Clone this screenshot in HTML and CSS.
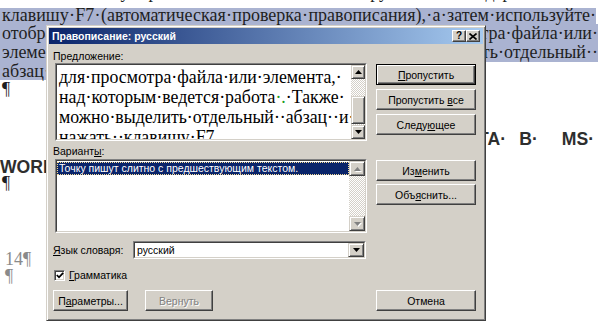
FILE: index.html
```html
<!DOCTYPE html>
<html lang="ru">
<head>
  <meta charset="UTF-8">
  <title>Правописание: русский</title>
  <link rel="stylesheet" href="styles.css">
</head>
<body>
  <div class="doc">
    <div class="line line-top">
      <span>нажмите·кнопку·Правописание·на·панели·инструментов·Стандартная·или·нажмите·</span>
      <span class="sel-tail"></span>
    </div>
    <div class="line just sel sel-first">клавишу · F7 · (автоматическая · проверка · правописания), · а · затем · используйте·</div>
    <div class="line sel">
      <span>отображаемое·контекстное</span>
      <span>для·просмотра·файла·или·</span>
    </div>
    <div class="line sel">
      <span>элемента,·над·которым</span>
      <span>Также·можно·выделить·отдельный··</span>
    </div>
    <div class="line">
      <span class="sel-part">абзац··и··нажать·клавишу·F7</span>
    </div>
    <div class="line"><span>¶</span></div>

    <div class="heading">
      <div class="heading-line right">
        <span>ПРОВЕРКА·</span>
        <span>ПРАВОПИСАНИЯ·</span>
        <span>ТЕКСТА·</span>
        <span>В·</span>
        <span class="wide">MS·</span>
      </div>
      <div class="heading-line">WORD¶</div>
    </div>
    <div class="line mark"><span>¶</span></div>

    <div class="footer">
      <div>14¶</div>
      <div>¶</div>
    </div>
  </div>

  <div class="dialog">
    <div class="titlebar">
      <span class="title">Правописание: русский</span>
      <div class="title-buttons">
        <span class="tbtn">?</span>
        <span class="tbtn">
          <svg width="8" height="7" viewBox="0 0 8 7"><path d="M0.5 0.5 L7.5 6.5 M7.5 0.5 L0.5 6.5" stroke="#000" stroke-width="1.6"/></svg>
        </span>
      </div>
    </div>

    <div class="dlg-body">
      <div class="col-left">
        <div class="label">Пре<u>д</u>ложение:</div>
        <div class="field sentence">
          <div class="field-inner">
            <div class="sentence-text">
              <div>для·просмотра·файла·или·элемента,·</div>
              <div>над·которым·ведется·работа<span class="gram">·.</span>·Также·</div>
              <div>можно·выделить·отдельный··абзац··и·</div>
              <div>нажать··клавишу·F7</div>
            </div>
            <div class="scrollbar narrow">
              <span class="sb-btn">
                <svg width="7" height="4" viewBox="0 0 7 4"><path d="M3.5 0 L7 4 L0 4 Z" fill="#000"/></svg>
              </span>
              <span class="sb-track upper"></span>
              <span class="sb-thumb"></span>
              <span class="sb-track"></span>
              <span class="sb-btn">
                <svg width="7" height="4" viewBox="0 0 7 4"><path d="M0 0 L7 0 L3.5 4 Z" fill="#000"/></svg>
              </span>
            </div>
          </div>
        </div>

        <div class="label gap">Вариант<u>ы</u>:</div>
        <div class="field list">
          <div class="field-inner">
            <div class="list-items">
              <div class="item selected">Точку пишут слитно с предшествующим текстом.</div>
            </div>
            <div class="scrollbar">
              <span class="sb-btn off">
                <svg width="7" height="4" viewBox="0 0 7 4"><path d="M3.5 0 L7 4 L0 4 Z" fill="#808080"/></svg>
              </span>
              <span class="sb-track"></span>
              <span class="sb-btn off">
                <svg width="7" height="4" viewBox="0 0 7 4"><path d="M0 0 L7 0 L3.5 4 Z" fill="#808080"/></svg>
              </span>
            </div>
          </div>
        </div>

        <div class="lang-row">
          <span class="label"><u>Я</u>зык словаря:</span>
          <div class="field combo">
            <div class="field-inner">
              <span class="combo-value">русский</span>
              <span class="sb-btn">
                <svg width="7" height="4" viewBox="0 0 7 4"><path d="M0 0 L7 0 L3.5 4 Z" fill="#000"/></svg>
              </span>
            </div>
          </div>
        </div>

        <div class="check-row">
          <span class="checkbox">
            <svg width="8" height="7" viewBox="0 0 8 7"><path d="M0.8 3 L3 5.3 L7.2 0.8" fill="none" stroke="#000" stroke-width="1.8"/></svg>
          </span>
          <span><u>Г</u>рамматика</span>
        </div>

        <div class="btn-row">
          <button class="btn params"><span>П<u>а</u>раметры...</span></button>
          <button class="btn undo" disabled><span>Вернуть</span></button>
        </div>
      </div>

      <div class="col-right">
        <button class="btn default"><span><u>П</u>ропустить</span></button>
        <button class="btn"><span>Пропустить <u>в</u>се</span></button>
        <button class="btn"><span>Следу<u>ю</u>щее</span></button>
        <button class="btn group"><span>Из<u>м</u>енить</span></button>
        <button class="btn tight"><span>Объ<u>я</u>снить...</span></button>
        <button class="btn cancel"><span>Отмена</span></button>
      </div>
    </div>
  </div>
</body>
</html>
```

FILE: styles.css
```css
* {
  box-sizing: border-box;
}

body {
  margin: 0;
  width: 608px;
  height: 322px;
  overflow: hidden;
  position: relative;
  background: #fff;
}

/* document behind the dialog */

.doc {
  font-family: "Liberation Serif", "Times New Roman", serif;
  font-size: 18px;
  color: #1f1f1f;
  width: 598px;
  margin-top: -13px;
}

.line {
  display: flex;
  justify-content: space-between;
  height: 18.7px;
  line-height: 18.7px;
  padding-left: 2px;
  white-space: nowrap;
}

.line.just {
  display: block;
  width: 596px;
  text-align: justify;
  text-align-last: justify;
  word-spacing: -0.25em;
}

.sel {
  background: #aab3d1;
}

.sel-first {
  background: linear-gradient(transparent 2px, #aab3d1 2px);
}

.line-top {
  margin-right: -10px;
  line-height: 11px;
}

.sel-tail {
  flex: 0 0 11px;
  background: #aab3d1;
}

.sel-part {
  background: #aab3d1;
  margin-left: -2px;
  padding-left: 2px;
}

.heading {
  margin-top: 31px;
  font-family: "Liberation Sans", Arial, sans-serif;
  font-weight: bold;
  font-size: 17.6px;
  color: #2e2e2e;
}

.heading-line {
  height: 18px;
  line-height: 18px;
  margin-bottom: 10px;
  white-space: nowrap;
}

.heading-line.right {
  display: flex;
  justify-content: flex-end;
  gap: 13px;
  padding-right: 4px;
}

.heading-line .wide {
  margin-left: 11px;
}

.mark {
  margin-top: -12px;
}

.footer {
  margin-top: 58px;
  padding-left: 5px;
  color: #8a8a8a;
  line-height: 17px;
}

/* dialog */

.dialog {
  position: absolute;
  left: 46px;
  top: 25px;
  width: 440px;
  height: 296px;
  padding: 2px;
  display: flex;
  flex-direction: column;
  background: #d4d0c8;
  border: 1px solid;
  border-color: #d4d0c8 #404040 #404040 #d4d0c8;
  box-shadow: inset 1px 1px #fff, inset -1px -1px #808080;
  font-family: "Liberation Sans", Tahoma, Arial, sans-serif;
  font-size: 10.5px;
  color: #000;
}

.titlebar {
  height: 16px;
  flex: none;
  display: flex;
  align-items: center;
  justify-content: space-between;
  padding: 0 3px 0 3px;
  background: linear-gradient(to right, #0a246a, #a6caf0);
}

.title {
  color: #fff;
  font-weight: bold;
  font-size: 10.5px;
}

.title-buttons {
  display: flex;
}

.tbtn {
  width: 14px;
  height: 12px;
  display: flex;
  align-items: center;
  justify-content: center;
  background: #d4d0c8;
  border: 1px solid;
  border-color: #fff #404040 #404040 #fff;
  box-shadow: inset -1px -1px #808080;
  font-weight: bold;
  font-size: 10px;
  line-height: 1;
}

.dlg-body {
  flex: 1;
  display: flex;
  gap: 9px;
  padding: 6px 7px 7px 4px;
}

.col-left {
  width: 314px;
  display: flex;
  flex-direction: column;
}

.col-right {
  width: 100px;
  margin-top: 14px;
  display: flex;
  flex-direction: column;
  gap: 4px;
}

.label {
  height: 13px;
  line-height: 13px;
}

.label.gap {
  margin-top: 4px;
}

.field {
  border: 1px solid;
  border-color: #808080 #fff #fff #808080;
}

.field-inner {
  height: 100%;
  display: flex;
  background: #fff;
  border: 1px solid;
  border-color: #404040 #d4d0c8 #d4d0c8 #404040;
}

.sentence {
  margin-left: 2px;
  width: 312px;
  height: 78px;
}

.sentence-text {
  flex: 1;
  overflow: hidden;
  padding: 2px 0 0 2px;
  font-family: "Liberation Serif", "Times New Roman", serif;
  font-size: 17.8px;
  line-height: 20px;
  white-space: nowrap;
}

.gram {
  color: #1c9a1c;
}

.list {
  margin-left: 2px;
  margin-top: 1px;
  width: 312px;
  height: 74px;
}

.list-items {
  flex: 1;
  padding: 1px 0 0 0;
}

.item {
  height: 13px;
  line-height: 11px;
  padding-left: 1px;
  white-space: nowrap;
}

.item.selected {
  background: #0a246a;
  color: #fff;
  border: 1px dotted #f5db95;
}

.scrollbar {
  width: 16px;
  display: flex;
  flex-direction: column;
}

.scrollbar.narrow {
  width: 14px;
}

.sb-btn,
.sb-thumb {
  height: 15px;
  flex: none;
  display: flex;
  align-items: center;
  justify-content: center;
  background: #d4d0c8;
  border: 1px solid;
  border-color: #d4d0c8 #404040 #404040 #d4d0c8;
  box-shadow: inset 1px 1px #fff, inset -1px -1px #808080;
}

.narrow .sb-btn {
  height: 14px;
}

.sb-btn.off svg {
  filter: drop-shadow(1px 1px 0 #fff);
}

.sb-track {
  flex: 1;
  background: repeating-conic-gradient(#fff 0 25%, #d4d0c8 0 50%) 0 0 / 2px 2px;
}

.sb-track.upper {
  flex: 0 0 17px;
}

.sb-thumb {
  height: 28px;
}

.lang-row {
  margin-top: 8px;
  width: 313px;
  height: 18px;
  display: flex;
  align-items: center;
  justify-content: space-between;
}

.combo {
  width: 233px;
  height: 18px;
}

.combo-value {
  flex: 1;
  padding-left: 2px;
  line-height: 14px;
}

.combo .sb-btn {
  width: 16px;
  height: 14px;
}

.check-row {
  margin-top: 9px;
  height: 14px;
  display: flex;
  align-items: center;
  gap: 4px;
  padding-left: 1px;
}

.checkbox {
  width: 11px;
  height: 11px;
  display: flex;
  align-items: center;
  justify-content: center;
  background: #fff;
  border: 1px solid;
  border-color: #808080 #fff #fff #808080;
  box-shadow: inset 1px 1px #404040, inset -1px -1px #d4d0c8;
}

.btn-row {
  margin-top: auto;
  display: flex;
  gap: 17px;
}

.btn {
  height: 21px;
  padding: 0;
  display: flex;
  align-items: center;
  justify-content: center;
  background: #d4d0c8;
  border: 1px solid;
  border-color: #fff #404040 #404040 #fff;
  box-shadow: inset -1px -1px #808080;
  font: inherit;
  color: #000;
  white-space: nowrap;
}

.btn.default {
  border-color: #000;
  box-shadow: inset 1px 1px #fff, inset -1px -1px #404040, inset -2px -2px #808080;
}

.btn.group {
  margin-top: 21px;
}

.btn.tight {
  margin-top: -1px;
}

.btn.cancel {
  margin-top: auto;
}

.btn:disabled {
  color: #808080;
  text-shadow: 1px 1px 0 #fff;
}

.params {
  width: 75px;
}

.undo {
  width: 68px;
}
```
